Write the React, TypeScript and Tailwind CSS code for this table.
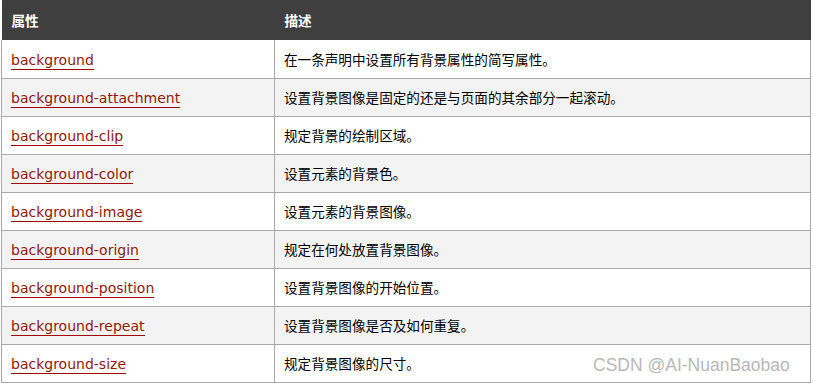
import React from "react";

const rows: [string, string][] = [
  ["background", "在一条声明中设置所有背景属性的简写属性。"],
  ["background-attachment", "设置背景图像是固定的还是与页面的其余部分一起滚动。"],
  ["background-clip", "规定背景的绘制区域。"],
  ["background-color", "设置元素的背景色。"],
  ["background-image", "设置元素的背景图像。"],
  ["background-origin", "规定在何处放置背景图像。"],
  ["background-position", "设置背景图像的开始位置。"],
  ["background-repeat", "设置背景图像是否及如何重复。"],
  ["background-size", "规定背景图像的尺寸。"],
];

const cjk = { fontFamily: '"Microsoft YaHei", "Noto Sans CJK SC", sans-serif' };

export default function App() {
  return (
    <div className="relative w-[813px] h-[385px] bg-white overflow-hidden">
      <table className="ml-px w-[810px] border-collapse table-fixed">
        <colgroup>
          <col className="w-[273px]" />
          <col />
        </colgroup>
        <thead>
          <tr className="h-[40px] bg-[#3f3f3f] text-white">
            <th className="text-left font-bold text-[13.6px] pl-[10px] align-middle" style={cjk}>
              属性
            </th>
            <th className="text-left font-bold text-[13.6px] pl-[10px] align-middle" style={cjk}>
              描述
            </th>
          </tr>
        </thead>
        <tbody>
          {rows.map(([p, d], i) => (
            <tr key={p} className={`h-[38px] ${i % 2 === 1 ? "bg-[#f3f3f3]" : "bg-white"}`}>
              <td className="border border-[#aaaaaa] border-t-0 pl-[9px] align-middle">
                <a
                  href="#"
                  className="text-[#8f1a0c] text-[14px] border-b border-[#a00000] pb-[1px]"
                  style={{ fontFamily: '"DejaVu Sans", Verdana, sans-serif' }}
                >
                  {p}
                </a>
              </td>
              <td className="border border-[#aaaaaa] border-t-0 pl-[9px] align-middle text-[13.6px] text-black" style={cjk}>
                {d}
              </td>
            </tr>
          ))}
        </tbody>
      </table>
      <div
        className="absolute left-[593px] top-[357px] text-[17.5px] text-[#b8b8b8] leading-none"
        style={{ fontFamily: '"Liberation Sans", Arial, sans-serif', textShadow: "0 0 1px #fff, 0 0 1px #fff" }}
      >
        CSDN @AI-NuanBaobao
      </div>
    </div>
  );
}
